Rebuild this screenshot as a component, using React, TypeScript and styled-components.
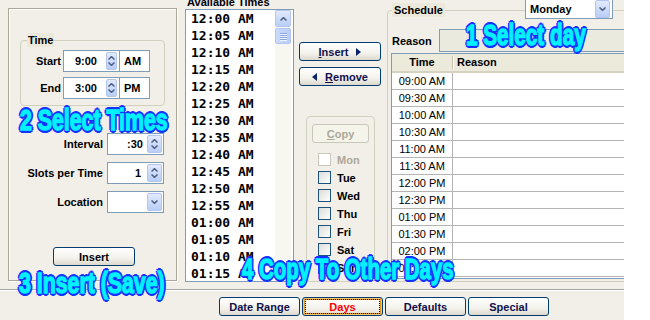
import React from "react";
import styled, { createGlobalStyle, css } from "styled-components";

const GlobalStyle = createGlobalStyle`
  html, body {
    margin: 0;
    padding: 0;
    background: #ffffff;
  }
  body {
    font-family: "Liberation Sans", Arial, sans-serif;
    font-size: 11px;
    color: #000;
  }
`;

const availableTimes = [
  "12:00 AM", "12:05 AM", "12:10 AM", "12:15 AM", "12:20 AM", "12:25 AM",
  "12:30 AM", "12:35 AM", "12:40 AM", "12:45 AM", "12:50 AM", "12:55 AM",
  "01:00 AM", "01:05 AM", "01:10 AM", "01:15 AM",
];

const scheduleRows = [
  "09:00 AM", "09:30 AM", "10:00 AM", "10:30 AM", "11:00 AM", "11:30 AM",
  "12:00 PM", "12:30 PM", "01:00 PM", "01:30 PM", "02:00 PM", "02:30 PM",
];

const copyDays = ["Mon", "Tue", "Wed", "Thu", "Fri", "Sat", "Sun"];

const tabs = ["Date Range", "Days", "Defaults", "Special"];

// ---- small drawn glyphs ----

const Chevron = ({ up }: { up?: boolean }) => (
  <svg width="7" height="4" viewBox="0 0 7 4">
    <path
      d={up ? "M0.5 3.5 L3.5 0.6 L6.5 3.5" : "M0.5 0.5 L3.5 3.4 L6.5 0.5"}
      stroke="#4d6185"
      strokeWidth="1.5"
      fill="none"
    />
  </svg>
);

const Triangle = ({ left }: { left?: boolean }) => (
  <svg width="5" height="8" viewBox="0 0 5 8">
    <path d={left ? "M5 0 L0 4 L5 8 Z" : "M0 0 L5 4 L0 8 Z"} fill="#0a246a" />
  </svg>
);

// ---- layout ----

const Window = styled.div`
  position: relative;
  width: 624px;
  height: 320px;
  overflow: hidden;
  background: #f1efe8;
`;

const TopArea = styled.div`
  display: flex;
  align-items: flex-start;
  height: 289px;
  & > * {
    flex-shrink: 0;
  }
`;

const LeftPanel = styled.div`
  margin: 8px 0 0 8px;
  width: 169px;
  height: 273px;
  box-sizing: border-box;
  border: 1px solid #aca899;
  box-shadow: 1px 1px 0 #fff, inset 1px 1px 0 #fff;
  padding-top: 24px;
  display: flex;
  flex-direction: column;
`;

const Group = styled.fieldset`
  margin: 0;
  border: 1px solid #d0d0bf;
  border-radius: 4px;
  min-width: 0;
`;

const GroupTitle = styled.legend`
  margin-left: 6px;
  padding: 0 1px;
  line-height: 14px;
  font-weight: bold;
  background: #ebe9dc;
`;

const TimeGroup = styled(Group)`
  margin-left: 11px;
  width: 145px;
  box-sizing: border-box;
  padding: 3px 0 6px 0;
  display: flex;
  flex-direction: column;
  gap: 5px;
`;

const FieldRow = styled.div<{ $labelWidth: number; $gap: number }>`
  display: flex;
  align-items: center;
  height: 22px;
  & > label {
    width: ${(p) => p.$labelWidth}px;
    margin-right: ${(p) => p.$gap}px;
    text-align: right;
    font-weight: bold;
  }
`;

const SpinField = styled.div<{ $w: number }>`
  display: flex;
  align-items: center;
  width: ${(p) => p.$w}px;
  height: 22px;
  box-sizing: border-box;
  border: 1px solid #7f9db9;
  background: #fff;
`;

const SpinValue = styled.span<{ $pad: number }>`
  flex: 1;
  text-align: right;
  font-weight: bold;
  padding-right: ${(p) => p.$pad}px;
`;

const BlueButton = styled.div<{ $w: number; $mr: number }>`
  width: ${(p) => p.$w}px;
  height: 18px;
  margin-right: ${(p) => p.$mr}px;
  box-sizing: border-box;
  border: 1px solid #b3c6ef;
  border-radius: 2px;
  background: linear-gradient(#e2eafd, #b9cdf7);
  display: flex;
  flex-direction: column;
  align-items: center;
  justify-content: space-evenly;
`;

const Suffix = styled.div`
  width: 30px;
  height: 22px;
  box-sizing: border-box;
  border: 1px solid #7f9db9;
  border-left: none;
  background: #fff;
  font-weight: bold;
  padding-left: 4px;
  display: flex;
  align-items: center;
`;

const SettingsBlock = styled.div`
  margin-top: 27px;
  display: flex;
  flex-direction: column;
  gap: 7px;
`;

const XpButton = styled.button<{ $w: number; $h?: number }>`
  width: ${(p) => p.$w}px;
  height: ${(p) => p.$h ?? 19}px;
  padding: 0;
  box-sizing: border-box;
  border: 1px solid #003c74;
  border-radius: 3px;
  background: linear-gradient(#ffffff 0%, #f3f2ec 60%, #dcd8cc 100%);
  font-family: "Liberation Sans", Arial, sans-serif;
  font-size: 11px;
  font-weight: bold;
  color: #10104e;
  display: flex;
  align-items: center;
  justify-content: center;
  gap: 8px;
  & u {
    text-decoration: underline;
  }
`;

const SaveButton = styled(XpButton)`
  margin: 34px 0 0 44px;
  color: #000;
`;

const AvailableColumn = styled.div`
  margin-left: 8px;
  width: 109px;
  display: flex;
  flex-direction: column;
`;

const ColumnTitle = styled.div`
  margin-top: -4px;
  height: 13px;
  line-height: 13px;
  padding-left: 2px;
  font-weight: bold;
`;

const ListBox = styled.div`
  height: 273px;
  box-sizing: border-box;
  border: 1px solid #7f9db9;
  background: #fff;
  display: flex;
  overflow: hidden;
`;

const ListItems = styled.div`
  flex: 1;
  padding-left: 5px;
`;

const ListItem = styled.div`
  height: 17px;
  line-height: 17px;
  font-family: "DejaVu Sans Mono", "Liberation Mono", monospace;
  font-weight: bold;
  font-size: 13px;
`;

const ScrollTrack = styled.div`
  width: 16px;
  margin-right: 2px;
  background: #f7f6f1;
  display: flex;
  flex-direction: column;
  gap: 1px;
`;

const ScrollUp = styled.div`
  height: 17px;
  box-sizing: border-box;
  border: 1px solid #b3c6ef;
  border-radius: 2px;
  background: linear-gradient(#e2eafd, #b9cdf7);
  display: flex;
  align-items: center;
  justify-content: center;
`;

const ScrollThumb = styled.div`
  height: 16px;
  box-sizing: border-box;
  border: 1px solid #b3c6ef;
  border-radius: 2px;
  background: linear-gradient(90deg, #cbdafb, #b9cdf7);
  display: flex;
  flex-direction: column;
  align-items: center;
  justify-content: center;
  gap: 1px;
  & > i {
    width: 7px;
    height: 1px;
    background: #8aa4de;
    box-shadow: 0 1px 0 #eef3fe;
  }
`;

const ActionColumn = styled.div`
  margin-left: 5px;
  width: 82px;
  display: flex;
  flex-direction: column;
`;

const MoveButton = styled(XpButton)<{ $top: number }>`
  margin-top: ${(p) => p.$top}px;
`;

const CopyGroup = styled.div`
  margin: 30px 0 0 7px;
  width: 69px;
  height: 166px;
  box-sizing: border-box;
  border: 1px solid #d0d0bf;
  border-radius: 4px;
  padding: 7px 0 0 5px;
`;

const DisabledButton = styled.div`
  width: 57px;
  height: 19px;
  box-sizing: border-box;
  border: 1px solid #c9c7ba;
  border-radius: 3px;
  background: #f5f4ea;
  color: #aca899;
  font-weight: bold;
  display: flex;
  align-items: center;
  justify-content: center;
  margin-bottom: 10px;
`;

const CheckRow = styled.div<{ $disabled?: boolean }>`
  display: flex;
  align-items: center;
  height: 18px;
  padding-left: 6px;
  gap: 6px;
  font-weight: bold;
  color: ${(p) => (p.$disabled ? "#aca899" : "#000")};
  & > span {
    margin-top: -5px;
  }
`;

const CheckBox = styled.div<{ $disabled?: boolean }>`
  width: 13px;
  height: 13px;
  box-sizing: border-box;
  margin-top: -5px;
  ${(p) =>
    p.$disabled
      ? css`
          border: 1px solid #cac8bb;
          background: #fff;
        `
      : css`
          border: 1px solid #1c5180;
          background: linear-gradient(135deg, #dcdcd7, #ffffff);
        `}
`;

const ScheduleGroup = styled(Group)`
  position: relative;
  margin: 3px 0 0 6px;
  width: 260px;
  height: 279px;
  box-sizing: border-box;
  padding: 0;
`;

const ScheduleTitle = styled(GroupTitle)`
  margin-left: 4px;
  padding: 0 2px;
`;

const DayCombo = styled.div`
  position: absolute;
  left: 137px;
  top: -19px;
  width: 88px;
  height: 21px;
  box-sizing: border-box;
  border: 1px solid #7f9db9;
  background: #fff;
  display: flex;
  align-items: center;
  font-weight: bold;
  padding-left: 4px;
  & > span {
    flex: 1;
  }
`;

const ReasonRow = styled.div`
  display: flex;
  align-items: center;
  margin-top: 12px;
  padding-left: 4px;
  & > label {
    width: 47px;
    font-weight: bold;
  }
`;

const ReasonInput = styled.div`
  flex: 1;
  height: 23px;
  box-sizing: border-box;
  border: 1px solid #7f9db9;
  background: #ebeadf;
`;

const Table = styled.div`
  margin: 1px 0 0 3px;
  height: 226px;
  box-sizing: border-box;
  border-top: 1px solid #7f9db9;
  border-left: 1px solid #7f9db9;
  border-bottom: 1px solid #7f9db9;
  background: #fff;
  overflow: hidden;
`;

const HeaderRow = styled.div`
  display: flex;
  height: 19px;
  box-sizing: border-box;
  background: #ebeadb;
  border-bottom: 2px solid #d6d2c2;
  font-weight: bold;
  line-height: 17px;
`;

const HeaderTime = styled.div`
  width: 60px;
  text-align: center;
  border-right: 1px solid #c5c2b2;
  box-shadow: 1px 0 0 #fff;
  margin: 2px 0 2px;
  line-height: 13px;
`;

const HeaderReason = styled.div`
  padding-left: 4px;
`;

const Row = styled.div`
  display: flex;
  height: 17px;
  box-sizing: border-box;
  border-bottom: 1px solid #b4b4b4;
  line-height: 16px;
`;

const TimeCell = styled.div`
  width: 60px;
  text-align: center;
  border-right: 1px solid #b4b4b4;
`;

const Separator = styled.div`
  border-top: 1px solid #a7a6aa;
  border-bottom: 1px solid #ffffff;
`;

const BottomBar = styled.div`
  display: flex;
  gap: 2px;
  padding: 6px 0 0 219px;
`;

const TabButton = styled(XpButton)<{ $active?: boolean }>`
  ${(p) =>
    p.$active &&
    css`
      color: #ff0000;
      box-shadow: inset 0 0 0 1px #f5c56a, inset 0 0 0 2px #e59a1c;
      & > span {
        outline: 1px dotted #000;
        outline-offset: 0;
        display: flex;
        align-items: center;
        justify-content: center;
        width: 73px;
        height: 13px;
      }
    `}
`;

const Annotation = styled.div<{ $x: number; $y: number; $sx: number }>`
  position: absolute;
  left: ${(p) => p.$x}px;
  top: ${(p) => p.$y}px;
  z-index: 5;
  white-space: nowrap;
  font-family: "Liberation Sans", Arial, sans-serif;
  font-weight: bold;
  font-size: 30px;
  line-height: 30px;
  color: #00f2ff;
  -webkit-text-stroke: 1.4px #00f2ff;
  transform: scaleX(${(p) => p.$sx});
  transform-origin: left top;
  text-shadow: 2px 0 0 #1433ff, -2px 0 0 #1433ff, 0 2px 0 #1433ff,
    0 -2px 0 #1433ff, 2px 2px 0 #1433ff, -2px -2px 0 #1433ff,
    2px -2px 0 #1433ff, -2px 2px 0 #1433ff, 3px 0 0 #1433ff,
    -3px 0 0 #1433ff, 0 3px 0 #1433ff, 0 -3px 0 #1433ff;
`;

// ---- pieces ----

const Spinner = ({
  value,
  width,
  pad,
  btn,
  mr,
}: {
  value: string;
  width: number;
  pad: number;
  btn: number;
  mr: number;
}) => (
  <SpinField $w={width}>
    <SpinValue $pad={pad}>{value}</SpinValue>
    <BlueButton $w={btn} $mr={mr}>
      <Chevron up />
      <Chevron />
    </BlueButton>
  </SpinField>
);

const App = () => {
  return (
    <>
      <GlobalStyle />
      <Window>
        <TopArea>
          <LeftPanel>
            <TimeGroup>
              <GroupTitle>Time</GroupTitle>
              <FieldRow $labelWidth={40} $gap={2}>
                <label>Start</label>
                <Spinner value="9:00" width={57} pad={9} btn={11} mr={2} />
                <Suffix>AM</Suffix>
              </FieldRow>
              <FieldRow $labelWidth={40} $gap={2}>
                <label>End</label>
                <Spinner value="3:00" width={57} pad={9} btn={11} mr={2} />
                <Suffix>PM</Suffix>
              </FieldRow>
            </TimeGroup>
            <SettingsBlock>
              <FieldRow $labelWidth={94} $gap={4}>
                <label>Interval</label>
                <Spinner value=":30" width={57} pad={4} btn={15} mr={1} />
              </FieldRow>
              <FieldRow $labelWidth={94} $gap={4}>
                <label>Slots per Time</label>
                <Spinner value="1" width={57} pad={6} btn={15} mr={1} />
              </FieldRow>
              <FieldRow $labelWidth={94} $gap={4}>
                <label>Location</label>
                <SpinField $w={57}>
                  <SpinValue $pad={0} />
                  <BlueButton $w={15} $mr={1}>
                    <Chevron />
                  </BlueButton>
                </SpinField>
              </FieldRow>
            </SettingsBlock>
            <SaveButton $w={82}>Insert</SaveButton>
          </LeftPanel>

          <AvailableColumn>
            <ColumnTitle>Available Times</ColumnTitle>
            <ListBox>
              <ListItems>
                {availableTimes.map((t) => (
                  <ListItem key={t}>{t}</ListItem>
                ))}
              </ListItems>
              <ScrollTrack>
                <ScrollUp>
                  <Chevron up />
                </ScrollUp>
                <ScrollThumb>
                  <i />
                  <i />
                  <i />
                  <i />
                </ScrollThumb>
              </ScrollTrack>
            </ListBox>
          </AvailableColumn>

          <ActionColumn>
            <MoveButton $w={82} $top={42}>
              <span>
                <u>I</u>nsert
              </span>
              <Triangle />
            </MoveButton>
            <MoveButton $w={82} $top={6}>
              <Triangle left />
              <span>
                <u>R</u>emove
              </span>
            </MoveButton>
            <CopyGroup>
              <DisabledButton>
                <span>
                  <u>C</u>opy
                </span>
              </DisabledButton>
              {copyDays.map((d, i) => (
                <CheckRow key={d} $disabled={i === 0}>
                  <CheckBox $disabled={i === 0} />
                  <span>{d}</span>
                </CheckRow>
              ))}
            </CopyGroup>
          </ActionColumn>

          <ScheduleGroup>
            <ScheduleTitle>Schedule</ScheduleTitle>
            <DayCombo>
              <span>Monday</span>
              <BlueButton $w={15} $mr={2}>
                <Chevron />
              </BlueButton>
            </DayCombo>
            <ReasonRow>
              <label>Reason</label>
              <ReasonInput />
            </ReasonRow>
            <Table>
              <HeaderRow>
                <HeaderTime>Time</HeaderTime>
                <HeaderReason>Reason</HeaderReason>
              </HeaderRow>
              {scheduleRows.map((t) => (
                <Row key={t}>
                  <TimeCell>{t}</TimeCell>
                </Row>
              ))}
            </Table>
          </ScheduleGroup>
        </TopArea>

        <Separator />
        <BottomBar>
          {tabs.map((t) => (
            <TabButton key={t} $w={81} $active={t === "Days"}>
              <span>{t}</span>
            </TabButton>
          ))}
        </BottomBar>

        <Annotation $x={466} $y={20} $sx={0.69}>1 Select day</Annotation>
        <Annotation $x={20} $y={105} $sx={0.71}>2 Select Times</Annotation>
        <Annotation $x={19} $y={268} $sx={0.71}>3 Insert (Save)</Annotation>
        <Annotation $x={242} $y={254} $sx={0.68}>4 Copy To Other Days</Annotation>
      </Window>
    </>
  );
};

export default App;
